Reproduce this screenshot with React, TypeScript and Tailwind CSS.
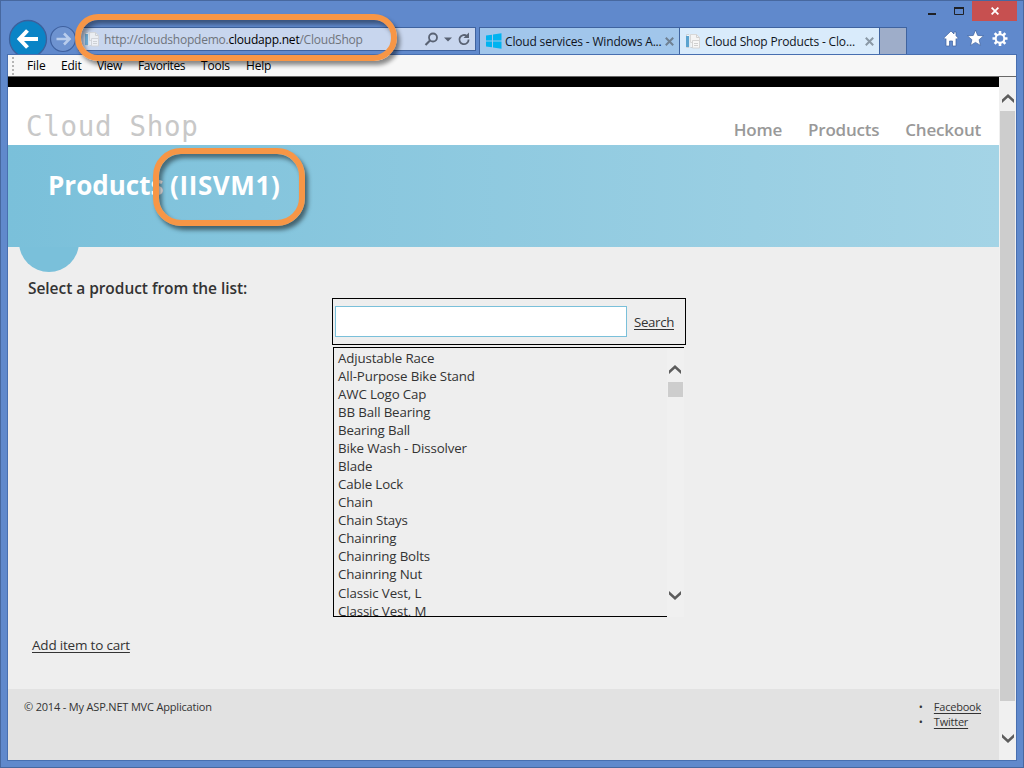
import React from "react";

const products = [
  "Adjustable Race",
  "All-Purpose Bike Stand",
  "AWC Logo Cap",
  "BB Ball Bearing",
  "Bearing Ball",
  "Bike Wash - Dissolver",
  "Blade",
  "Cable Lock",
  "Chain",
  "Chain Stays",
  "Chainring",
  "Chainring Bolts",
  "Chainring Nut",
  "Classic Vest, L",
  "Classic Vest, M",
];

function PageIcon() {
  return (
    <svg width="16" height="16" viewBox="0 0 16 16" className="shrink-0">
      <path d="M1.5 1.5h9v13h-9z" fill="#f4f6f8" stroke="#c9d0d6" />
      <path d="M1 3h3v11H1z" fill="#5ba3cf" />
      <path d="M4 1h1.500v14H4z" fill="#dfe9f0" />
      <path d="M5.500 1.500h6l3 3v5h-9z" fill="#f4f4f4" stroke="#d8d8d8" />
      <path d="M7.500 7.500h7v7.500h-7z" fill="#f7f7f7" stroke="#d4d4d4" />
      <path d="M11.500 1.500v3h3M9 10.500h4M9 12.500h4" stroke="#d0d0d0" fill="none" />
    </svg>
  );
}

function WindowsIcon() {
  return (
    <svg width="16" height="16" viewBox="0 0 16 16" className="shrink-0">
      <path
        d="M0 2.500l6-.8V7.500H0zM7 1.500L15.500.3v7.200H7zM0 8.500h6v5.800l-6-.8zM7 8.500h8.500v7.200L7 14.500z"
        fill="#00b3f0"
      />
    </svg>
  );
}

function CloseGlyph({ color }: { color: string }) {
  return (
    <svg width="9" height="9" viewBox="0 0 9 9" className="shrink-0">
      <path d="M.8.8l7.400 7.400M8.200.8L.8 8.200" stroke={color} strokeWidth="2" />
    </svg>
  );
}

function Chevron({ down = false }: { down?: boolean }) {
  return (
    <svg width="12" height="9" viewBox="0 0 12 9" className="shrink-0">
      <path
        d={down ? "M0 0L6 5.500L12 0V3.600L6 9L0 3.600z" : "M0 9L6 3.500L12 9V5.400L6 0L0 5.400z"}
        fill="#5c5c5c"
      />
    </svg>
  );
}

function BrowserBar() {
  return (
    <div className="flex h-[54px] shrink-0">
      <div className="flex h-[54px] w-[78px] shrink-0 overflow-hidden">
        <svg width="78" height="54" viewBox="0 0 78 54">
          <circle cx="28" cy="39" r="18.500" fill="#0a84c6" stroke="#3c609c" strokeWidth="1.300" />
          <path d="M38 39H20M27.500 30.500L19.500 39l8 8.500" stroke="#fff" strokeWidth="4" fill="none" />
          <circle cx="63" cy="39" r="12.500" fill="#6e93d0" stroke="#3f619f" strokeWidth="1.200" />
          <path d="M56.500 39h12M64 33.500l5.500 5.500-5.500 5.500" stroke="#b9cdec" strokeWidth="2.600" fill="none" />
        </svg>
      </div>
      <div className="mt-[27px] flex h-6 w-[398px] shrink-0 items-center border border-[#3f639f] bg-[#c8d6ee] pl-[5px]">
        <span className="opacity-80">
          <PageIcon />
        </span>
        <span className="ml-[4px] mt-[2px] whitespace-nowrap text-[12px] tracking-[-0.22px] text-[#6f747c]">
          http://cloudshopdemo.<span className="text-black">cloudapp.net</span>/CloudShop
        </span>
        <span className="ml-auto flex items-center pr-[3px]">
          <svg width="48" height="16" viewBox="0 0 48 16">
            <circle cx="9" cy="6.500" r="4" fill="none" stroke="#596273" strokeWidth="1.800" />
            <path d="M6 9.500l-4.500 4.500" stroke="#596273" strokeWidth="2.200" />
            <path d="M20 6.500h8l-4 4z" fill="#596273" />
            <path d="M43 5.100A4.600 4.600 0 1 0 44.600 8.500" fill="none" stroke="#596273" strokeWidth="1.800" />
            <path d="M45 1.500v5.500h-5.500z" fill="#596273" />
          </svg>
        </span>
      </div>
      <div className="ml-[3px] mt-[27px] flex h-[27px] text-[12px] text-[#10151d]">
        <div className="flex w-[201px] items-center border-x border-t border-[#3f639f] bg-[#a1c6eb] pl-[6px] pr-[5px]">
          <WindowsIcon />
          <span className="ml-[3px] mt-[2px] whitespace-nowrap tracking-[-0.17px]">Cloud services - Windows A...</span>
          <span className="ml-auto">
            <CloseGlyph color="#6f8092" />
          </span>
        </div>
        <div className="flex w-[200px] items-center border-r border-t border-[#3f639f] bg-[#d9ebfb] pl-[5px] pr-[5px]">
          <PageIcon />
          <span className="ml-[4px] mt-[2px] whitespace-nowrap tracking-[-0.16px]">Cloud Shop Products - Clo...</span>
          <span className="ml-auto">
            <CloseGlyph color="#8a98a5" />
          </span>
        </div>
        <div className="w-[27px] border-r border-t border-[#3f639f] bg-[#9eadc9]" />
      </div>
      <div className="ml-auto flex flex-col items-end">
        <div className="mt-px flex h-5 pr-[7px]">
          <svg width="44" height="20" viewBox="0 0 44 20">
            <path d="M0 12h8v2H0z" fill="#1f2126" />
            <path d="M26.500 7h9v6.500h-9z" fill="none" stroke="#1f2126" />
            <path d="M26 6h10v2H26z" fill="#1f2126" />
          </svg>
          <div className="flex w-[45px] items-center justify-center bg-[#c75050]">
            <svg width="8" height="8" viewBox="0 0 8 8">
              <path d="M.6.6l6.800 6.800M7.400.6L.6 7.400" stroke="#fff" strokeWidth="1.800" />
            </svg>
          </div>
        </div>
        <svg width="66" height="20" viewBox="0 0 66 20" className="mr-[15px] mt-[7px]">
          <g fill="#fff" stroke="#3f639f" strokeWidth=".7">
            <path d="M8 3L.8 10l1.300 1.400L3 10.600V18h3.500v-5h3v5H13v-7.400l.9.8L15.200 10 13 7.800V4h-2v2z" />
            <path d="M32.500 2l2.200 5.400 5.800.5-4.400 3.800 1.400 5.700-5-3-5 3 1.400-5.700-4.400-3.800 5.800-.5z" />
          </g>
          <g stroke="#fff" fill="none">
            <circle cx="57" cy="10.500" r="4.300" strokeWidth="2" />
            <path
              d="M57 3v3M57 15v3M49.500 10.500h3M61.500 10.500h3M51.700 5.200l2.100 2.100M60.200 13.700l2.100 2.100M62.300 5.200l-2.100 2.100M53.800 13.700l-2.100 2.100"
              strokeWidth="2.600"
            />
          </g>
        </svg>
      </div>
    </div>
  );
}

function MenuBar() {
  return (
    <div className="flex h-[22px] shrink-0 items-center border-b border-[#686868] bg-[#f7f7f7] pl-[4px] text-[12px] text-black">
      <svg width="3" height="20" viewBox="0 0 3 20">
        <path d="M1 1v19" stroke="#b5b5b5" strokeWidth="2" strokeDasharray="2 2" />
      </svg>
      <span className="ml-[12px] w-[34px] tracking-[-0.1px]">File</span>
      <span className="w-[36px] tracking-[-0.2px]">Edit</span>
      <span className="w-[41px] tracking-[-0.3px]">View</span>
      <span className="w-[63px] tracking-[-0.4px]">Favorites</span>
      <span className="w-[45px] tracking-[-0.2px]">Tools</span>
      <span className="tracking-[-0.2px]">Help</span>
    </div>
  );
}

function ProductPicker() {
  return (
    <div className="ml-[324px] mt-[-2px] w-[354px]">
      <div className="flex h-[47px] items-center border border-black pl-[2px]">
        <input className="h-[31px] w-[292px] border border-[#7ac0da] bg-white outline-none" />
        <a className="ml-[7px] mt-[2px] text-[13.3px] tracking-[-0.35px] underline underline-offset-2">Search</a>
      </div>
      <div className="ml-px mt-[2px] flex h-[270px] w-[351px] border-l border-t border-black">
        <ul className="h-[269px] w-[333px] overflow-hidden border-b border-black pl-[4px] pt-[0.7px] text-[13.3px] leading-[18.070px] tracking-[-0.14px]">
          {products.map((name) => (
            <li key={name} className="whitespace-nowrap">
              {name}
            </li>
          ))}
        </ul>
        <div className="flex w-[17px] flex-col items-center bg-[#f0f0f0] pb-[17px] pt-[17px]">
          <div className="mr-px">
            <Chevron />
          </div>
          <div className="mt-[8px] h-[15px] w-[15px] bg-[#cdcdcd]" />
          <div className="mr-px mt-auto">
            <Chevron down />
          </div>
        </div>
      </div>
    </div>
  );
}

function Site() {
  return (
    <div className="flex w-[991px] flex-col border-t-[10px] border-black bg-[#eeeeee] text-[#333333]">
      <header className="flex h-[58px] shrink-0 items-end justify-between bg-white pl-[18px] pr-[18px]">
        <span className="whitespace-nowrap pb-[2px] font-['DejaVu_Sans_Mono',monospace] text-[27.500px] font-light leading-[34px] tracking-[0.7px] text-[#c8c8c8]">
          Cloud Shop
        </span>
        <nav className="flex gap-[26px] pb-[3px] text-[17px] font-semibold leading-6 tracking-[-0.22px] text-[#999999]">
          <a>Home</a>
          <a>Products</a>
          <a>Checkout</a>
        </nav>
      </header>
      <section className="relative h-[102px] shrink-0 bg-gradient-to-r from-[#7ac0da] to-[#a4d4e6] pl-[40px] pt-[22px]">
        <div className="absolute left-[11px] top-[102px] flex h-[25px] w-[60px] flex-col justify-end overflow-hidden">
          <div className="h-[60px] w-[60px] shrink-0 rounded-full bg-[#7ac0da]" />
        </div>
        <h1 className="whitespace-nowrap text-[26px] font-bold leading-9 text-white">
          Products <span className="tracking-[0.6px]">(IISVM1)</span>
        </h1>
      </section>
      <main className="h-[442px] shrink-0 pt-[30px]">
        <h3 className="pl-[20px] text-[15.500px] font-semibold leading-[23px] tracking-[-0.05px]">
          Select a product from the list:
        </h3>
        <ProductPicker />
        <a className="ml-[24px] mt-[18px] inline-block text-[13.500px] leading-[20px] tracking-[-0.2px] underline underline-offset-2">
          Add item to cart
        </a>
      </main>
      <footer className="flex flex-1 justify-between bg-[#e2e2e2] pl-[16px] pr-[18px] pt-[10px] text-[11px] leading-[15px] tracking-[-0.18px]">
        <p>© 2014 - My ASP.NET MVC Application</p>
        <ul>
          {["Facebook", "Twitter"].map((label) => (
            <li key={label} className="flex">
              <span className="w-[15px]">•</span>
              <a className="tracking-[-0.23px] underline underline-offset-2">{label}</a>
            </li>
          ))}
        </ul>
      </footer>
    </div>
  );
}

export default function App() {
  return (
    <div className="relative h-[768px] w-[1024px] overflow-hidden bg-[#6089cc] font-['Open_Sans','Noto_Sans',sans-serif]">
      <div className="flex h-full flex-col">
        <BrowserBar />
        <div className="mx-[7px] flex h-[707px] flex-col border border-[#486fb0]">
          <MenuBar />
          <div className="flex min-h-0 flex-1">
            <Site />
            <div className="flex flex-1 flex-col items-center bg-[#f0f0f0] pt-[17px]">
              <Chevron />
              <div className="mt-[8px] h-[590px] w-[15px] bg-[#cdcdcd]" />
              <div className="mt-[33px]">
                <Chevron down />
              </div>
            </div>
          </div>
        </div>
      </div>
      <div className="pointer-events-none absolute inset-0 border border-[#47689f]" />
      <div className="absolute left-[75px] top-[14px] h-[47px] w-[322px] rounded-[23px] border-[6px] border-[#f79646] shadow-[3px_4px_4px_rgba(0,0,0,0.45),inset_3px_4px_4px_rgba(0,0,0,0.4)]" />
      <div className="absolute left-[153px] top-[148px] h-[78px] w-[152px] rounded-[28px] border-[6px] border-[#f79646] shadow-[3px_4px_4px_rgba(0,0,0,0.5),inset_3px_4px_4px_rgba(0,0,0,0.45)]" />
    </div>
  );
}
